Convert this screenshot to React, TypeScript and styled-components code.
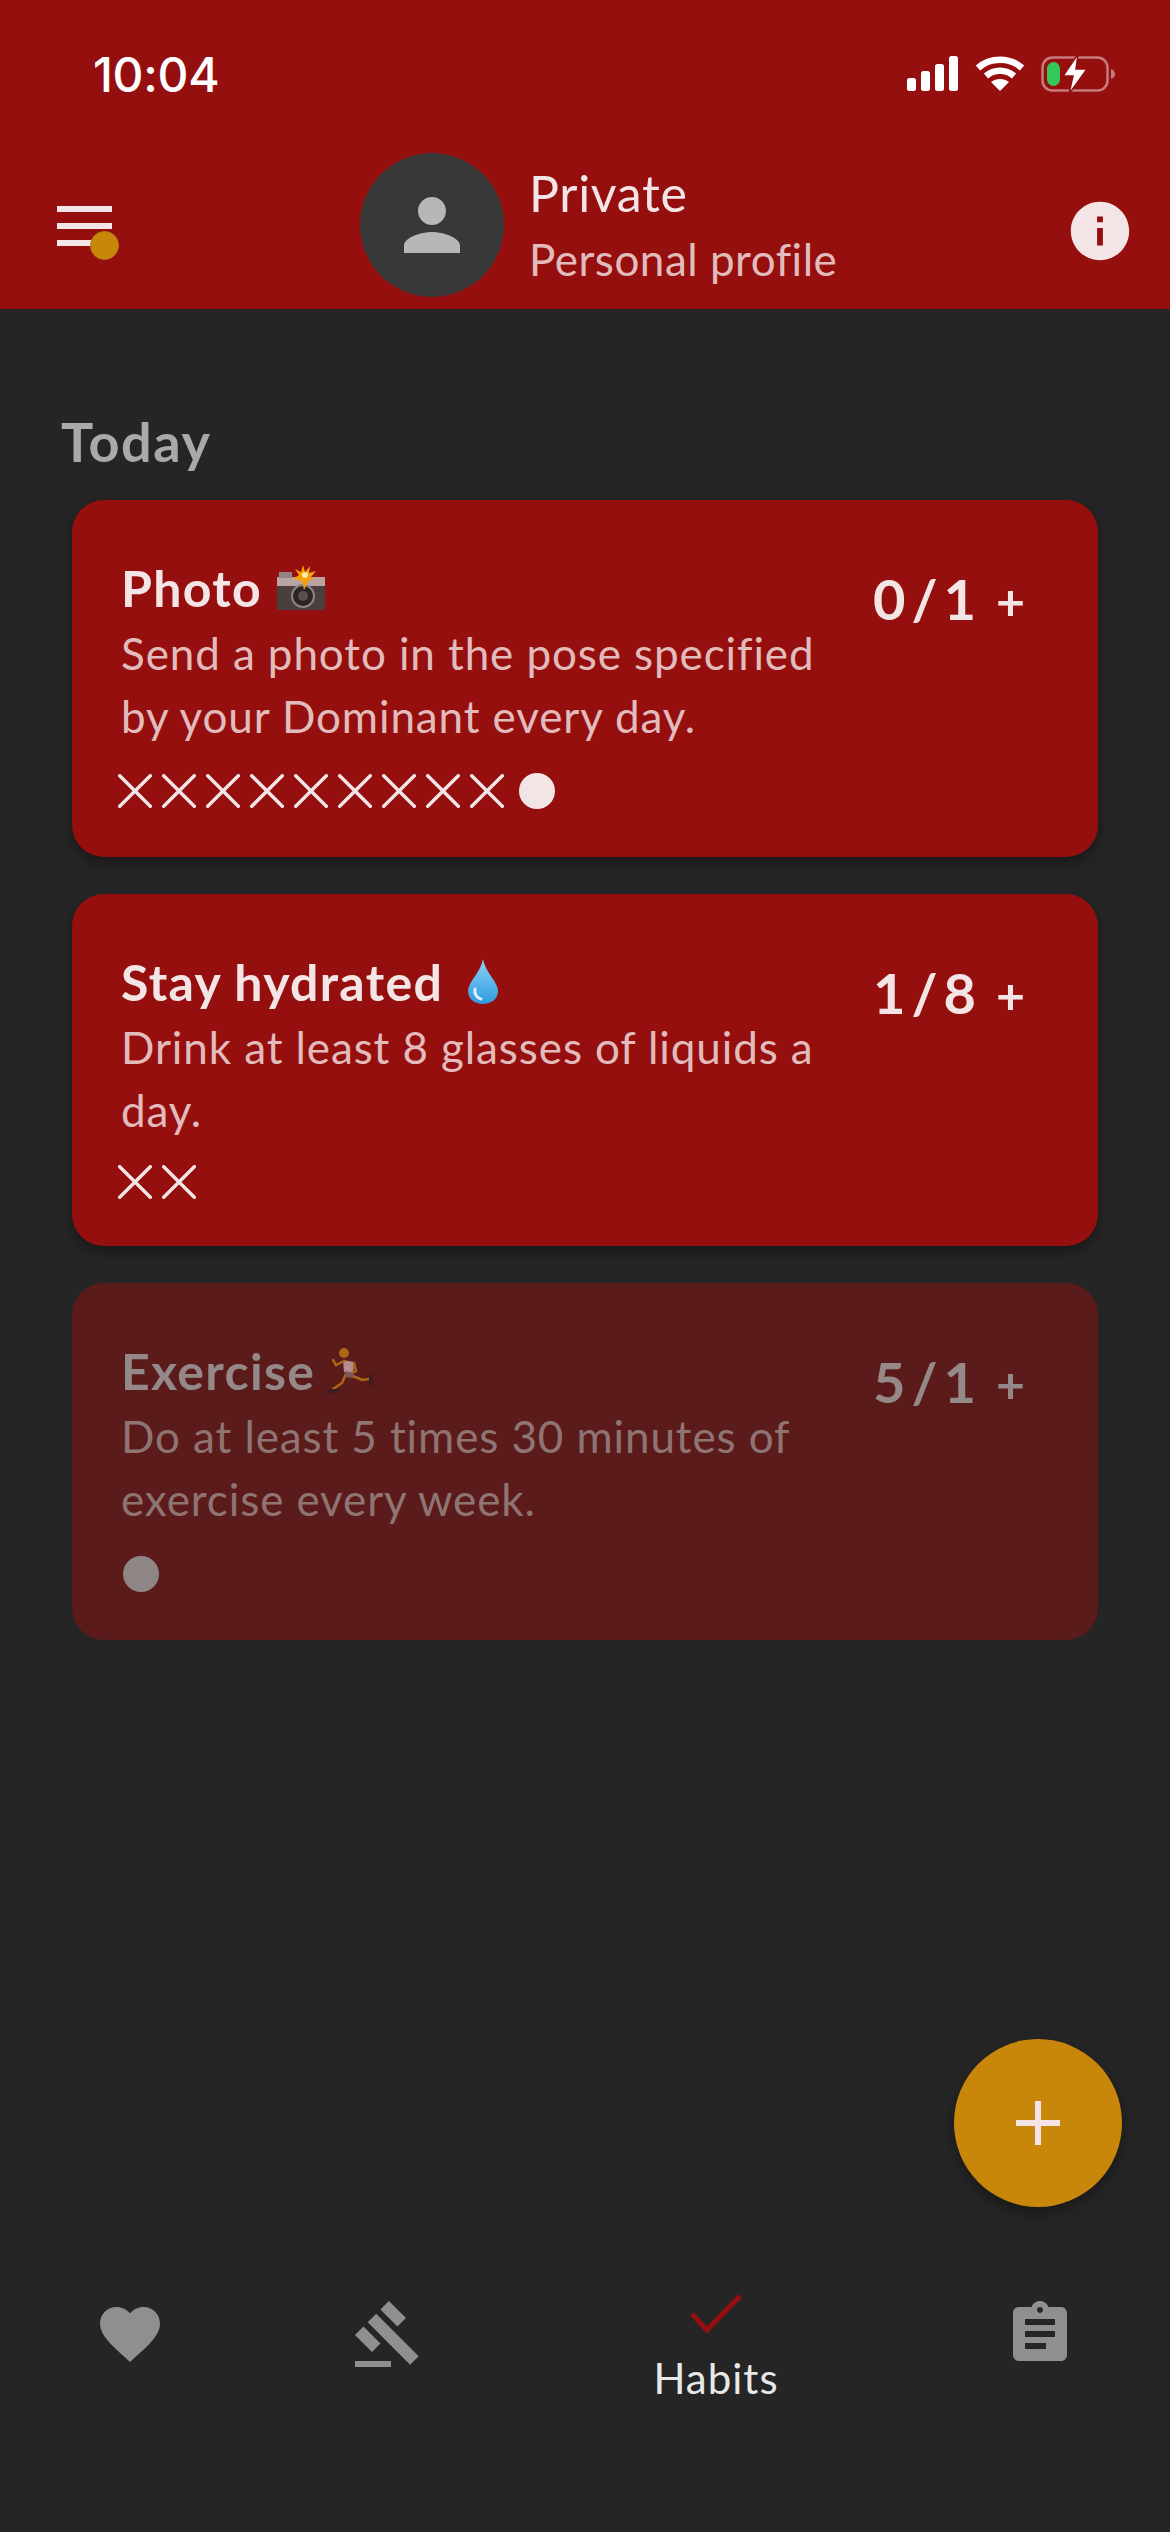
import React from 'react';
import styled, { createGlobalStyle } from 'styled-components';
import {
  MdAssignment, MdFavorite, MdGavel, MdInfo, MdPerson,
} from 'react-icons/md';

const GlobalStyle = createGlobalStyle`
  html, body {
    margin: 0;
    padding: 0;
    background: #252525;
    font-family: "Lato", "Noto Sans", sans-serif;
  }
`;

const Page = styled.div`
  position: relative;
  display: flex;
  flex-direction: column;
  width: 1170px;
  height: 2532px;
  overflow: hidden;
  background: #252525;
`;

const Header = styled.header`
  display: flex;
  flex-direction: column;
  height: 309px;
  background: #960f0f;
  color: #fff;
`;

const StatusBar = styled.div`
  display: flex;
  align-items: center;
  justify-content: space-between;
  height: 42px;
  margin-top: 53px;
  padding: 0 53px 0 93px;
`;

const Clock = styled.span`
  font-family: "Inter", sans-serif;
  font-size: 48px;
  font-weight: 500;
  letter-spacing: -0.3px;
`;

const StatusIcons = styled.div`
  display: flex;
  align-items: center;
  gap: 16px;
`;

const ProfileRow = styled.div`
  position: relative;
  display: flex;
  align-items: flex-start;
  margin-top: 58px;
  padding-left: 360px;
`;

const MenuButton = styled.div`
  position: absolute;
  left: 57px;
  top: 53px;
  width: 64px;
  height: 64px;
`;

const MenuDot = styled.span`
  position: absolute;
  left: 33px;
  top: 25px;
  width: 29px;
  height: 29px;
  border-radius: 50%;
  background: #c8870a;
  border: 1px solid #b97c0b;
  box-sizing: border-box;
`;

const Avatar = styled.div`
  display: flex;
  align-items: center;
  justify-content: center;
  width: 144px;
  height: 144px;
  border-radius: 50%;
  background: #383838;
  color: #b7b7b7;
  font-size: 84px;
`;

const ProfileText = styled.div`
  display: flex;
  flex-direction: column;
  margin-left: 25px;
`;

const ProfileName = styled.div`
  margin-top: 10px;
  font-size: 50px;
  line-height: 60px;
  letter-spacing: 0.7px;
  color: #f3e5e5;
`;

const ProfileSub = styled.div`
  margin-top: 10px;
  font-size: 44px;
  line-height: 52px;
  letter-spacing: 0.5px;
  color: #e2bcbc;
`;

const InfoButton = styled.div`
  position: absolute;
  left: 1065px;
  top: 43px;
  color: #f3e5e5;
  font-size: 70px;
  line-height: 0;
`;

const Content = styled.main`
  display: flex;
  flex: 1;
  flex-direction: column;
  padding: 103px 72px 0;
`;

const SectionTitle = styled.h2`
  margin: 0 0 28px -11px;
  font-size: 54px;
  line-height: 60px;
  font-weight: 700;
  letter-spacing: 1.6px;
  color: #a9a9a9;
`;

const CardList = styled.div`
  display: flex;
  flex-direction: column;
  gap: 37px;
`;

const Card = styled.article<{ $muted?: boolean }>`
  display: flex;
  justify-content: space-between;
  box-sizing: border-box;
  padding: 61px 73px 47px 49px;
  border-radius: 32px;
  background: ${({ $muted }) => ($muted ? '#5c1b1b' : '#960f0f')};
  box-shadow: ${({ $muted }) => ($muted ? 'none' : '0 6px 14px rgba(0, 0, 0, 0.35)')};
`;

const CardBody = styled.div`
  display: flex;
  flex-direction: column;
  width: 700px;
`;

const CardTitle = styled.div<{ $muted?: boolean }>`
  display: flex;
  align-items: center;
  gap: 14px;
  font-size: 50px;
  line-height: 54px;
  font-weight: 700;
  letter-spacing: 1.3px;
  color: ${({ $muted }) => ($muted ? '#948888' : '#f3e5e5')};
`;

const EmojiBox = styled.span<{ $muted?: boolean }>`
  display: flex;
  opacity: ${({ $muted }) => ($muted ? 0.6 : 1)};
`;

const CardText = styled.div<{ $muted?: boolean }>`
  margin-top: 7px;
  font-size: 44px;
  line-height: 63px;
  letter-spacing: 0.9px;
  color: ${({ $muted }) => ($muted ? '#8f7474' : '#e2bcbc')};
`;

const Marks = styled.div`
  display: flex;
  align-items: center;
  gap: 10px;
  margin: 23px 0 0 -3px;
`;

const Dot = styled.span<{ $muted?: boolean }>`
  width: 36px;
  height: 36px;
  margin: 1.5px 0 1.5px 5px;
  border-radius: 50%;
  background: ${({ $muted }) => ($muted ? '#8e8585' : '#f3e5e5')};
`;

const Counter = styled.div<{ $muted?: boolean }>`
  display: flex;
  align-items: baseline;
  height: 60px;
  margin-top: 8px;
  font-size: 56px;
  line-height: 60px;
  font-weight: 700;
  color: ${({ $muted }) => ($muted ? '#948888' : '#f3e5e5')};
`;

const Slash = styled.span`
  margin: 0 6px;
`;

const Plus = styled.span`
  margin-left: 20px;
  font-size: 50px;
`;

const Fab = styled.div`
  position: absolute;
  left: 954px;
  top: 2039px;
  display: flex;
  align-items: center;
  justify-content: center;
  width: 168px;
  height: 168px;
  border-radius: 50%;
  background: #c8870a;
  box-shadow: 0 6px 14px rgba(0, 0, 0, 0.35);
`;

const NavBar = styled.nav`
  display: grid;
  grid-template-columns: 260px 256px 400px 248px;
  height: 238px;
`;

const NavItem = styled.div<{ $active?: boolean }>`
  display: flex;
  flex-direction: column;
  align-items: center;
  padding-top: ${({ $active }) => ($active ? '0' : '4px')};
  color: #8f8f8f;
  font-size: 72px;
  line-height: 0;
`;

const NavLabel = styled.span`
  margin-top: 19px;
  font-size: 42px;
  line-height: 50px;
  letter-spacing: 1px;
  color: #e8e8e8;
`;

function Signal() {
  return (
    <svg width="52" height="36" viewBox="0 0 52 36" fill="#fff">
      <rect x="0" y="22" width="9" height="13" rx="2.5" />
      <rect x="14" y="15" width="9" height="20" rx="2.5" />
      <rect x="28" y="8" width="9" height="27" rx="2.5" />
      <rect x="42" y="0" width="9" height="35" rx="2.5" />
    </svg>
  );
}

function Wifi() {
  return (
    <svg width="50" height="36" viewBox="0 0 50 36" fill="none" stroke="#fff" strokeWidth="6.5">
      <path d="M3 12 C15 1 35 1 47 12" />
      <path d="M11 20 C19 13 31 13 39 20" />
      <path d="M25 35 L16 26 C21 22 29 22 34 26 Z" fill="#fff" stroke="none" />
    </svg>
  );
}

function Battery() {
  return (
    <svg width="76" height="40" viewBox="0 0 76 40">
      <rect x="1.5" y="3.5" width="65" height="33" rx="10" fill="none" stroke="#fff" strokeOpacity="0.45" strokeWidth="2.5" />
      <rect x="6" y="8" width="13" height="24" rx="6.5" fill="#34c759" />
      <path d="M70 15 C73 16 74 18 74 20 C74 22 73 24 70 25 Z" fill="#fff" fillOpacity="0.45" />
      <path d="M37 0 L22 22 H32 L28 40 L46 15 H35 Z" fill="#fff" stroke="#960f0f" strokeWidth="1.5" />
    </svg>
  );
}

function MenuLines() {
  return (
    <svg width="56" height="40" viewBox="0 0 56 40" fill="#f3e5e5">
      <rect x="0" y="0" width="55" height="6" />
      <rect x="0" y="17" width="55" height="6" />
      <rect x="0" y="34" width="40" height="6" />
    </svg>
  );
}

function Cross() {
  return (
    <svg width="34" height="34" viewBox="0 0 34 34" stroke="#f3e5e5" strokeWidth="3.4">
      <path d="M0.5 0.5 L33.5 33.5 M33.5 0.5 L0.5 33.5" />
    </svg>
  );
}

function CameraFlash() {
  return (
    <svg width="50" height="46" viewBox="0 0 50 46">
      <rect x="1" y="12" width="48" height="33" rx="2" fill="#4a3f3f" />
      <rect x="1" y="12" width="48" height="9" fill="#b9a3a3" />
      <rect x="3" y="7" width="13" height="6" fill="#8f8585" />
      <circle cx="27" cy="31" r="11" fill="#2b2626" stroke="#8c8484" strokeWidth="2" />
      <circle cx="27" cy="31" r="5" fill="#595151" />
      <path d="M27 0 L29 7 L34 1 L33 8 L40 6 L35 12 L38 15 L33 15 L28 25 L26 16 L17 14 L23 10 L19 4 L25 7 Z" fill="#f59f0b" />
      <circle cx="29" cy="10" r="3" fill="#fde9a8" />
    </svg>
  );
}

function Droplet() {
  return (
    <svg width="44" height="48" viewBox="-8 0 44 48">
      <defs>
        <linearGradient id="drop" x1="0" y1="0" x2="0" y2="1">
          <stop offset="0" stopColor="#8ed2f5" />
          <stop offset="1" stopColor="#2f9be0" />
        </linearGradient>
      </defs>
      <path d="M18 1 C20 14 33 24 33 33 C33 41 26 46 18 46 C10 46 3 41 3 33 C3 24 16 14 18 1 Z" fill="url(#drop)" />
      <path d="M10 31 C9 36 12 40 16 41" fill="none" stroke="#d9f1fc" strokeWidth="3" strokeLinecap="round" />
    </svg>
  );
}

function Runner() {
  return (
    <svg width="44" height="46" viewBox="0 0 44 46" fill="none" strokeLinecap="round">
      <circle cx="15" cy="5" r="5" fill="#e09a12" />
      <path d="M14 12 L25 14 L24 26 L15 24 Z" fill="#f0dada" />
      <path d="M15 13 L7 17 L4 12 M25 15 L27 23 L23 25" stroke="#e09a12" strokeWidth="2.5" />
      <path d="M17 26 L13 35 L4 41 M24 28 L33 32 L40 31" stroke="#e09a12" strokeWidth="2.5" />
      <path d="M16 23 L25 25 L24 30 L17 29 Z" fill="#8d8585" />
      <path d="M1 43 L8 43 M42 28 L42 36" stroke="#222" strokeWidth="4" />
    </svg>
  );
}

function CheckMark() {
  return (
    <svg width="52" height="40" viewBox="0 0 52 40" fill="none" stroke="#960f0f" strokeWidth="5">
      <path d="M2 20 L17 36 L50 2" />
    </svg>
  );
}

function FabPlus() {
  return (
    <svg width="44" height="44" viewBox="0 0 44 44" fill="#f3e5e5">
      <rect x="19" y="0" width="6" height="44" />
      <rect x="0" y="19" width="44" height="6" />
    </svg>
  );
}

type Habit = {
  title: string
  icon: React.ReactNode
  text: string
  done: string
  goal: string
  crosses: number
  dot?: boolean
  muted?: boolean
}

const habits: Habit[] = [
  {
    title: 'Photo',
    icon: <CameraFlash />,
    text: 'Send a photo in the pose specified by your Dominant every day.',
    done: '0',
    goal: '1',
    crosses: 9,
    dot: true,
  },
  {
    title: 'Stay hydrated',
    icon: <Droplet />,
    text: 'Drink at least 8 glasses of liquids a day.',
    done: '1',
    goal: '8',
    crosses: 2,
  },
  {
    title: 'Exercise',
    icon: <Runner />,
    text: 'Do at least 5 times 30 minutes of exercise every week.',
    done: '5',
    goal: '1',
    crosses: 0,
    dot: true,
    muted: true,
  },
];

export default function App() {
  return (
    <Page>
      <GlobalStyle />
      <Header>
        <StatusBar>
          <Clock>10:04</Clock>
          <StatusIcons>
            <Signal />
            <Wifi />
            <Battery />
          </StatusIcons>
        </StatusBar>
        <ProfileRow>
          <MenuButton>
            <MenuLines />
            <MenuDot />
          </MenuButton>
          <Avatar><MdPerson /></Avatar>
          <ProfileText>
            <ProfileName>Private</ProfileName>
            <ProfileSub>Personal profile</ProfileSub>
          </ProfileText>
          <InfoButton><MdInfo /></InfoButton>
        </ProfileRow>
      </Header>
      <Content>
        <SectionTitle>Today</SectionTitle>
        <CardList>
          {habits.map((habit) => (
            <Card key={habit.title} $muted={habit.muted}>
              <CardBody>
                <CardTitle $muted={habit.muted}>
                  {habit.title}
                  <EmojiBox $muted={habit.muted}>{habit.icon}</EmojiBox>
                </CardTitle>
                <CardText $muted={habit.muted}>{habit.text}</CardText>
                <Marks>
                  {Array.from({ length: habit.crosses }, (_, i) => <Cross key={i} />)}
                  {habit.dot ? <Dot $muted={habit.muted} /> : null}
                </Marks>
              </CardBody>
              <Counter $muted={habit.muted}>
                {habit.done}
                <Slash>/</Slash>
                {habit.goal}
                <Plus>+</Plus>
              </Counter>
            </Card>
          ))}
        </CardList>
      </Content>
      <Fab><FabPlus /></Fab>
      <NavBar>
        <NavItem><MdFavorite /></NavItem>
        <NavItem><MdGavel /></NavItem>
        <NavItem $active>
          <CheckMark />
          <NavLabel>Habits</NavLabel>
        </NavItem>
        <NavItem><MdAssignment /></NavItem>
      </NavBar>
    </Page>
  );
}
